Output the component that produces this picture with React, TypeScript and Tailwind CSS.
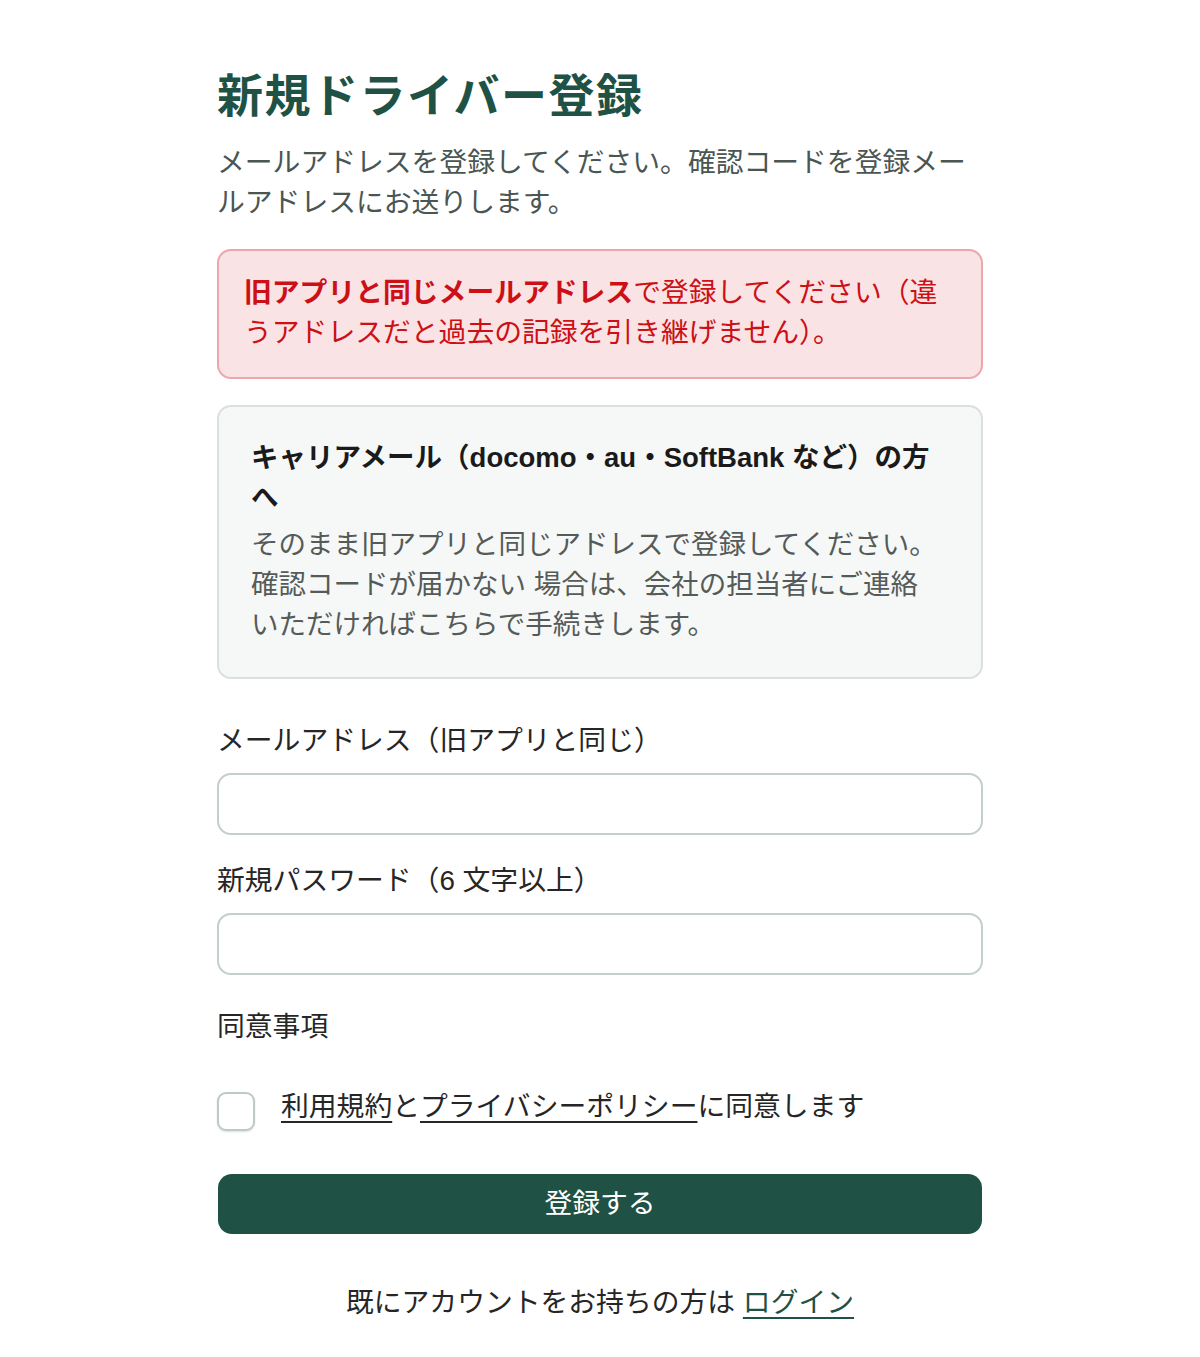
import React from "react";

export default function App() {
  return (
    <div
      className="min-h-[1357px] bg-white"
      style={{ fontFamily: '"Liberation Sans", "Noto Sans CJK JP", sans-serif' }}
    >
      <div className="mx-auto w-[766px] pt-[68px] pb-[35px]">
        <h1 className="text-[46px] leading-[56px] font-bold tracking-[1.5px] text-[#1f5244]">
          新規ドライバー登録
        </h1>
        <p className="mt-[19px] text-[27.8px] leading-[40px] text-[#4a5652]">
          メールアドレスを登録してください。確認コードを登録メー
          <br />
          ルアドレスにお送りします。
        </p>

        <div className="mt-[26px] rounded-[14px] border-2 border-[#eba7ab] bg-[#f9e3e5] px-[25px] pt-[22px] pb-[24px] text-[27.8px] leading-[40px] text-[#cc1016]">
          <span className="font-bold">旧アプリと同じメールアドレス</span>
          で登録してください（違
          <br />
          うアドレスだと過去の記録を引き継げません）。
        </div>

        <div className="mt-[26px] rounded-[14px] border-2 border-[#dbe0de] bg-[#f6f8f7] px-[32px] pt-[31px] pb-[32px]">
          <p className="text-[27.5px] leading-[40px] font-bold text-[#1a1a1a]">
            キャリアメール（docomo・au・SoftBank など）の方
            <br />へ
          </p>
          <p className="mt-[7px] text-[27.5px] leading-[40px] text-[#555b59]">
            そのまま旧アプリと同じアドレスで登録してください。
            <br />
            確認コードが届かない 場合は、会社の担当者にご連絡
            <br />
            いただければこちらで手続きします。
          </p>
        </div>

        <label className="mt-[42px] block text-[27.8px] leading-[40px] text-[#262626]">
          メールアドレス（旧アプリと同じ）
        </label>
        <input
          type="email"
          className="mt-[12px] block h-[62px] w-full rounded-[14px] border-2 border-[#c3cfcb] bg-white px-4 text-[26px] outline-none"
        />

        <label className="mt-[26px] block text-[27.8px] leading-[40px] text-[#262626]">
          新規パスワード（6 文字以上）
        </label>
        <input
          type="password"
          className="mt-[12px] block h-[62px] w-full rounded-[14px] border-2 border-[#c3cfcb] bg-white px-4 text-[26px] outline-none"
        />

        <p className="mt-[32px] text-[27.8px] leading-[40px] text-[#262626]">同意事項</p>

        <div className="mt-[40px] flex items-start">
          <div className="mt-[5px] h-[39px] w-[38px] shrink-0 rounded-[9px] border-2 border-[#bccbc6] bg-white shadow-[0_1px_2px_rgba(0,0,0,0.12)]" />
          <p className="ml-[26px] text-[27.8px] leading-[40px] text-[#262626]">
            <span className="underline underline-offset-[5px] decoration-[2px]">利用規約</span>
            と
            <span className="underline underline-offset-[5px] decoration-[2px]">プライバシーポリシー</span>
            に同意します
          </p>
        </div>

        <button className="mx-px mt-[43px] flex h-[60px] w-[764px] items-center justify-center rounded-[14px] bg-[#1f5244] text-[27.8px] text-white">
          登録する
        </button>

        <p className="mt-[49px] text-center text-[27.8px] leading-[40px] text-[#262626]">
          既にアカウントをお持ちの方は{" "}
          <span className="text-[#1f5244] underline underline-offset-[5px] decoration-[2px]">ログイン</span>
        </p>
      </div>
    </div>
  );
}
